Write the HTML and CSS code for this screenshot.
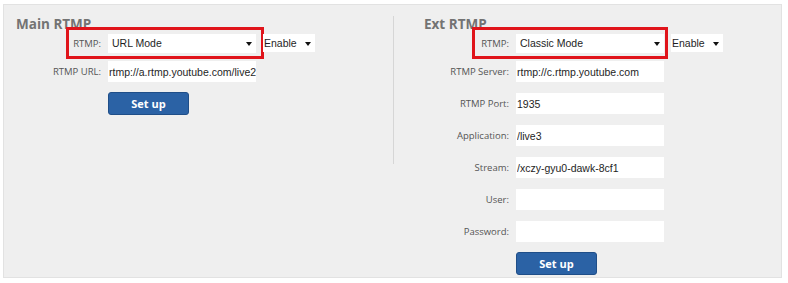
FILE: index.html
```html
<!DOCTYPE html>
<html lang="en">
<head>
    <meta charset="UTF-8">
    <title>RTMP Settings</title>
    <link rel="stylesheet" href="styles.css">
</head>
<body>
    <div class="panel">
        <div class="column column-main">
            <h3>Main RTMP</h3>

            <div class="row row-first">
                <span class="mark"></span>
                <label>RTMP:</label>
                <span class="sel sel-mode">
                    <select>
                        <option selected>URL Mode</option>
                        <option>Classic Mode</option>
                    </select>
                </span>
                <span class="sel sel-state">
                    <select>
                        <option selected>Enable</option>
                        <option>Disable</option>
                    </select>
                </span>
            </div>

            <div class="row row-last">
                <label>RTMP URL:</label>
                <input type="text" value="rtmp://a.rtmp.youtube.com/live2">
            </div>

            <div class="row-button">
                <button class="btn">Set up</button>
            </div>
        </div>

        <div class="divider"></div>

        <div class="column column-ext">
            <h3>Ext RTMP</h3>

            <div class="row row-first">
                <span class="mark mark-ext"></span>
                <label>RTMP:</label>
                <span class="sel sel-mode">
                    <select>
                        <option>URL Mode</option>
                        <option selected>Classic Mode</option>
                    </select>
                </span>
                <span class="sel sel-state">
                    <select>
                        <option selected>Enable</option>
                        <option>Disable</option>
                    </select>
                </span>
            </div>

            <div class="row">
                <label>RTMP Server:</label>
                <input type="text" value="rtmp://c.rtmp.youtube.com">
            </div>
            <div class="row">
                <label>RTMP Port:</label>
                <input type="text" value="1935">
            </div>
            <div class="row">
                <label>Application:</label>
                <input type="text" value="/live3">
            </div>
            <div class="row">
                <label>Stream:</label>
                <input type="text" value="/xczy-gyu0-dawk-8cf1">
            </div>
            <div class="row">
                <label>User:</label>
                <input type="text" value="">
            </div>
            <div class="row row-last">
                <label>Password:</label>
                <input type="password" value="">
            </div>

            <div class="row-button">
                <button class="btn">Set up</button>
            </div>
        </div>
    </div>
</body>
</html>
```

FILE: styles.css
```css
body {
    margin: 0;
    padding: 4px 0 5px 3px;
    background: #fff;
    font-family: "Open Sans", Arial, sans-serif;
}
.panel {
    display: flex;
    align-items: flex-start;
    width: 779px;
    box-sizing: border-box;
    padding: 11px 0 2px 0;
    background: #efefef;
    border: 1px solid #e2e2e2;
}
.column {
    box-sizing: border-box;
}
.column-main {
    width: 389px;
    padding-left: 12px;
}
.column-ext {
    padding-left: 30px;
}
.divider {
    width: 1px;
    height: 148px;
    background: #d6d6d6;
}
h3 {
    margin: 0 0 1px 0;
    font-size: 13.5px;
    line-height: 16px;
    font-weight: bold;
    color: #737373;
}
.row {
    position: relative;
    display: flex;
    align-items: center;
    height: 21px;
    margin-bottom: 11px;
}
.row-first {
    height: 20px;
    margin-bottom: 8px;
}
.row-last {
    margin-bottom: 9px;
}
label {
    width: 85px;
    margin-right: 7px;
    text-align: right;
    font-size: 9.5px;
    color: #555;
}
input, select {
    font-family: Arial, "Liberation Sans", sans-serif;
    font-size: 10.5px;
    color: #1e1e1e;
    background: #fff;
    border: none;
    outline: none;
    margin: 0;
}
input {
    width: 148px;
    height: 21px;
    box-sizing: border-box;
    padding: 0 0 0 1px;
}
.sel {
    position: relative;
    display: inline-block;
}
.sel select {
    appearance: none;
    -webkit-appearance: none;
    display: block;
    box-sizing: border-box;
    height: 19px;
    padding: 0 0 0 4px;
    border-radius: 0;
}
.sel::after {
    content: "";
    position: absolute;
    right: 4px;
    top: 8px;
    border-left: 3px solid transparent;
    border-right: 3px solid transparent;
    border-top: 4px solid #111;
}
.sel-mode select {
    width: 148px;
}
.sel-state {
    margin-left: 7px;
}
.sel-state select {
    width: 52px;
    height: 18px;
    padding-left: 1px;
}
.mark {
    position: absolute;
    left: 50px;
    top: -6px;
    width: 198px;
    height: 32px;
    box-sizing: border-box;
    border: 3px solid #e0141b;
    pointer-events: none;
}
.mark-ext {
    left: 48px;
    width: 196px;
}
.row-button {
    padding-left: 92px;
}
.btn {
    width: 81px;
    height: 23px;
    background: #2b62a5;
    border: 1px solid #1f4e88;
    border-radius: 3px;
    color: #fff;
    font-family: "Open Sans", Arial, sans-serif;
    font-size: 11px;
    font-weight: bold;
    cursor: pointer;
}
```
